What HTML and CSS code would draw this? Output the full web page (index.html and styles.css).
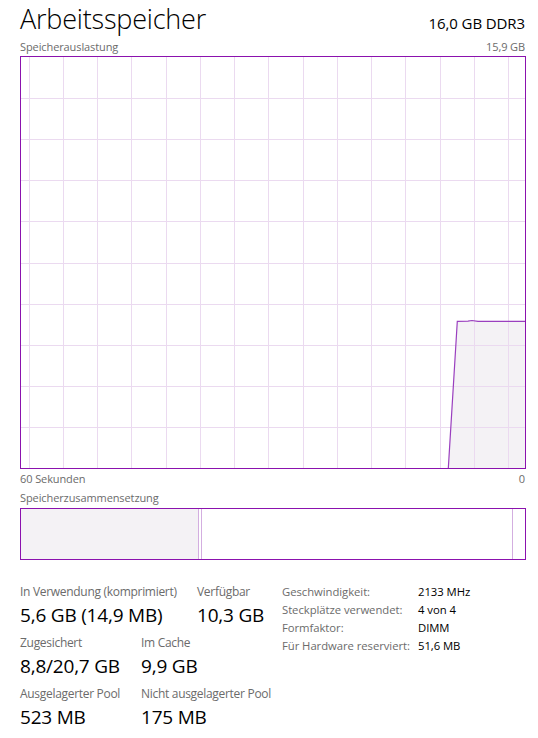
FILE: index.html
```html
<!DOCTYPE html>
<html lang="de">
<head>
<meta charset="utf-8">
<title>Arbeitsspeicher</title>
<link rel="stylesheet" href="styles.css">
</head>
<body>
<div class="page">
  <header class="head">
    <h1 class="title">Arbeitsspeicher</h1>
    <div class="model">16,0 GB DDR3</div>
  </header>
  <div class="caption-row graph-top">
    <span>Speicherauslastung</span>
    <span>15,9 GB</span>
  </div>
  <svg class="graph" width="506" height="413" viewBox="0 0 506 413">
    <polygon class="area" points="428.3,412.5 437.3,265.3 448,265.1 452,264.5 458,265.3 505.5,265.3 505.5,412.5"/>
    <g class="grid">
      <line x1="9.5" y1="0" x2="9.5" y2="413"/>
      <line x1="43.5" y1="0" x2="43.5" y2="413"/>
      <line x1="77.5" y1="0" x2="77.5" y2="413"/>
      <line x1="111.5" y1="0" x2="111.5" y2="413"/>
      <line x1="146.5" y1="0" x2="146.5" y2="413"/>
      <line x1="180.5" y1="0" x2="180.5" y2="413"/>
      <line x1="214.5" y1="0" x2="214.5" y2="413"/>
      <line x1="248.5" y1="0" x2="248.5" y2="413"/>
      <line x1="283.5" y1="0" x2="283.5" y2="413"/>
      <line x1="317.5" y1="0" x2="317.5" y2="413"/>
      <line x1="351.5" y1="0" x2="351.5" y2="413"/>
      <line x1="385.5" y1="0" x2="385.5" y2="413"/>
      <line x1="420.5" y1="0" x2="420.5" y2="413"/>
      <line x1="454.5" y1="0" x2="454.5" y2="413"/>
      <line x1="488.5" y1="0" x2="488.5" y2="413"/>
      <line x1="0" y1="42.5" x2="506" y2="42.5"/>
      <line x1="0" y1="83.5" x2="506" y2="83.5"/>
      <line x1="0" y1="124.5" x2="506" y2="124.5"/>
      <line x1="0" y1="165.5" x2="506" y2="165.5"/>
      <line x1="0" y1="207.5" x2="506" y2="207.5"/>
      <line x1="0" y1="248.5" x2="506" y2="248.5"/>
      <line x1="0" y1="289.5" x2="506" y2="289.5"/>
      <line x1="0" y1="330.5" x2="506" y2="330.5"/>
      <line x1="0" y1="371.5" x2="506" y2="371.5"/>
    </g>
    <polyline class="trace" points="428.3,412.5 437.3,265.3 448,265.1 452,264.5 458,265.3 505.5,265.3"/>
    <rect class="frame" x="0.5" y="0.5" width="505" height="412"/>
  </svg>
  <div class="caption-row graph-bottom">
    <span>60 Sekunden</span>
    <span>0</span>
  </div>
  <div class="caption-row comp-label">
    <span>Speicherzusammensetzung</span>
  </div>
  <svg class="composition" width="506" height="52" viewBox="0 0 506 52">
    <rect class="used" x="0.5" y="0.5" width="178" height="51"/>
    <line class="sep" x1="178.5" y1="0" x2="178.5" y2="52"/>
    <line class="sep" x1="181.5" y1="0" x2="181.5" y2="52"/>
    <line class="sep" x1="492.5" y1="0" x2="492.5" y2="52"/>
    <rect class="frame" x="0.5" y="0.5" width="505" height="51"/>
  </svg>
  <section class="stats">
    <div class="stats-left">
      <div class="stat-row">
        <div class="stat w-inuse">
          <div class="label">In Verwendung (komprimiert)</div>
          <div class="value">5,6 GB (14,9 MB)</div>
        </div>
        <div class="stat">
          <div class="label">Verfügbar</div>
          <div class="value">10,3 GB</div>
        </div>
      </div>
      <div class="stat-row">
        <div class="stat w-commit">
          <div class="label">Zugesichert</div>
          <div class="value">8,8/20,7 GB</div>
        </div>
        <div class="stat">
          <div class="label">Im Cache</div>
          <div class="value">9,9 GB</div>
        </div>
      </div>
      <div class="stat-row">
        <div class="stat w-commit">
          <div class="label">Ausgelagerter Pool</div>
          <div class="value">523 MB</div>
        </div>
        <div class="stat">
          <div class="label">Nicht ausgelagerter Pool</div>
          <div class="value">175 MB</div>
        </div>
      </div>
    </div>
    <dl class="info">
      <dt>Geschwindigkeit:</dt><dd>2133 MHz</dd>
      <dt>Steckplätze verwendet:</dt><dd>4 von 4</dd>
      <dt>Formfaktor:</dt><dd>DIMM</dd>
      <dt>Für Hardware reserviert:</dt><dd>51,6 MB</dd>
    </dl>
  </section>
</div>
</body>
</html>
```
FILE: styles.css
```css
html, body {
  margin: 0;
  padding: 0;
  background: #ffffff;
}
body {
  font-family: "Open Sans", "Noto Sans", "Liberation Sans", sans-serif;
  color: #000000;
}
.page {
  width: 506px;
  margin-left: 20px;
  display: flex;
  flex-direction: column;
}
.head {
  display: flex;
  justify-content: space-between;
  align-items: baseline;
  height: 38px;
}
.title {
  margin: 0;
  font-size: 27px;
  font-weight: 300;
  line-height: 38px;
  letter-spacing: -0.2px;
}
.model {
  font-size: 15px;
  line-height: 38px;
  padding-right: 1px;
  letter-spacing: -0.1px;
}
.caption-row {
  display: flex;
  justify-content: space-between;
  font-size: 11px;
  color: #6b6b6b;
  letter-spacing: -0.1px;
}
.graph-top {
  height: 18px;
  line-height: 18px;
}
.graph-top span:last-child,
.graph-bottom span:last-child {
  padding-right: 1px;
}
.graph {
  display: block;
}
.graph .area {
  fill: #f4f2f5;
  stroke: none;
}
.graph .grid line {
  stroke: #ebdaf0;
  stroke-width: 1;
}
.graph .trace {
  fill: none;
  stroke: #9a3fbf;
  stroke-width: 1.2;
}
.frame {
  fill: none;
  stroke: #8b12ae;
  stroke-width: 1;
}
.graph-bottom {
  height: 19px;
  line-height: 19px;
}
.comp-label {
  height: 20px;
  line-height: 20px;
}
.composition {
  display: block;
}
.composition .used {
  fill: #f4f2f5;
  stroke: none;
}
.composition .sep {
  stroke: #d3aee0;
  stroke-width: 1;
}
.stats {
  display: flex;
  align-items: flex-start;
  margin-top: 23px;
}
.stats-left {
  width: 262px;
  display: flex;
  flex-direction: column;
  gap: 5px;
}
.stat-row {
  display: flex;
}
.w-inuse {
  width: 177px;
}
.w-commit {
  width: 121px;
}
.label {
  font-size: 12px;
  line-height: 18px;
  color: #6b6b6b;
  letter-spacing: -0.3px;
  white-space: nowrap;
}
.value {
  font-size: 19px;
  line-height: 28px;
  color: #000000;
  letter-spacing: -0.2px;
  white-space: nowrap;
}
.info {
  margin: 0;
  display: grid;
  grid-template-columns: 136px auto;
  font-size: 11.3px;
  line-height: 18px;
  letter-spacing: -0.05px;
}
.info dt {
  color: #6b6b6b;
  white-space: nowrap;
}
.info dd {
  margin: 0;
  color: #000000;
  white-space: nowrap;
}
```
